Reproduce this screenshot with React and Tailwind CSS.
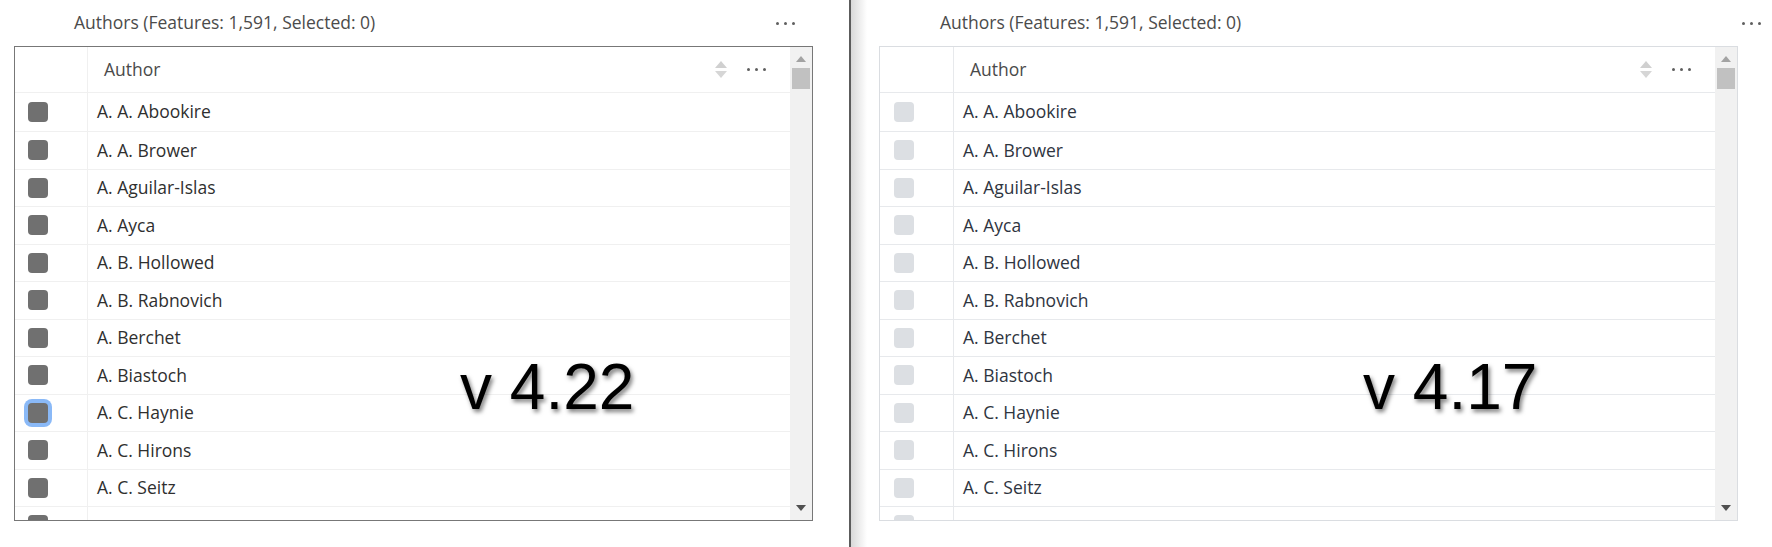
const authors = [
  'A. A. Abookire',
  'A. A. Brower',
  'A. Aguilar-Islas',
  'A. Ayca',
  'A. B. Hollowed',
  'A. B. Rabnovich',
  'A. Berchet',
  'A. Biastoch',
  'A. C. Haynie',
  'A. C. Hirons',
  'A. C. Seitz',
  '',
]

// Tiga titik menu
function Dots() {
  return (
    <div className="flex items-center gap-[5px]">
      <span className="w-[3px] h-[3px] rounded-full bg-[#5f5f5f]" />
      <span className="w-[3px] h-[3px] rounded-full bg-[#5f5f5f]" />
      <span className="w-[3px] h-[3px] rounded-full bg-[#5f5f5f]" />
    </div>
  )
}

function SortIcon() {
  return (
    <svg width="12" height="17" viewBox="0 0 12 17">
      <path d="M0 7 L6 0 L12 7 Z" fill="#d0d0d0" />
      <path d="M0 10 L12 10 L6 17 Z" fill="#d6d6d6" />
    </svg>
  )
}

function Scrollbar() {
  return (
    <div className="relative w-[22px] h-full bg-[#f1f1f1] shrink-0">
      <svg className="absolute left-[6px] top-[9px]" width="10" height="6" viewBox="0 0 10 6">
        <path d="M0 6 L5 0 L10 6 Z" fill="#a3a3a3" />
      </svg>
      <div className="absolute left-[2px] right-[2px] top-[21px] h-[21px] bg-[#c1c1c1]" />
      <svg className="absolute left-[6px] bottom-[9px]" width="10" height="6" viewBox="0 0 10 6">
        <path d="M0 0 L10 0 L5 6 Z" fill="#505050" />
      </svg>
    </div>
  )
}

function Table({ modern }) {
  const border = modern ? 'border-[#777777]' : 'border-[#dadde1]'
  const line = modern ? 'border-[#f0f0f0]' : 'border-[#e7e9ec]'
  const colW = modern ? 'w-[73px]' : 'w-[74px]'
  const boxMl = modern ? 'ml-[13px]' : 'ml-[14px]'
  const text = modern ? 'text-[#2f2f2f]' : 'text-[#2f353f]'

  return (
    <div className={`flex border ${border} ${modern ? 'w-[799px]' : 'w-[859px]'} h-[475px] bg-white`}>
      <div className="flex-1 min-w-0 overflow-hidden">
        {/* Header kolom */}
        <div className={`flex h-[46px] border-b ${line}`}>
          <div className={`${colW} shrink-0 border-r ${line}`} />
          <div className="flex-1 flex items-center pl-[16px] pr-[24px]">
            <span className="flex-1 text-[#4a4a4a]">Author</span>
            <SortIcon />
            <div className="ml-[20px]">
              <Dots />
            </div>
          </div>
        </div>

        {authors.map((name, i) => (
          <div
            key={i}
            className={`flex items-center border-b ${line} ${i === 0 ? 'h-[39px]' : 'h-[37.5px]'}`}
          >
            <div className={`${colW} shrink-0 h-full flex items-center border-r ${line}`}>
              <span
                className={`${boxMl} w-[20px] h-[20px] rounded-[4px] ${
                  modern ? 'bg-[#707070]' : 'bg-[#dcdfe3]'
                } ${modern && name === 'A. C. Haynie' ? 'ring-4 ring-[#8ab9f7]' : ''}`}
              />
            </div>
            <span className={`pl-[9px] ${text}`}>{name}</span>
          </div>
        ))}
      </div>
      <Scrollbar />
    </div>
  )
}

export default function App() {
  return (
    <div
      className="flex w-[1772px] h-[547px] bg-white overflow-hidden text-[17.5px] leading-none"
      style={{ fontFamily: '"Open Sans", "Noto Sans", sans-serif' }}
    >
      {/* Panel kiri: v 4.22 */}
      <div className="relative w-[849px] shrink-0 bg-white">
        <div className="flex items-center justify-between h-[46px] pl-[74px] pr-[54px] text-[#4b4b4b]">
          <span>Authors (Features: 1,591, Selected: 0)</span>
          <Dots />
        </div>
        <div className="pl-[14px]">
          <Table modern />
        </div>
        <span className="absolute left-[460px] top-[355px] text-[64px] leading-none text-black [text-shadow:2px_3px_4px_rgba(0,0,0,0.5)] [font-family:'Liberation_Sans',Arial,sans-serif]">
          v 4.22
        </span>
      </div>

      <div className="w-[2px] shrink-0 bg-[#5c5c5c]" />

      {/* Panel kanan: v 4.17 */}
      <div className="relative flex-1 bg-[linear-gradient(to_right,#d9d9d9,#ffffff_16px)]">
        <div className="flex items-center justify-between h-[46px] pl-[89px] pr-[11px] text-[#4b4b4b]">
          <span>Authors (Features: 1,591, Selected: 0)</span>
          <Dots />
        </div>
        <div className="pl-[28px]">
          <Table />
        </div>
        <span className="absolute left-[512px] top-[355px] text-[64px] leading-none text-black [text-shadow:2px_3px_4px_rgba(0,0,0,0.5)] [font-family:'Liberation_Sans',Arial,sans-serif]">
          v 4.17
        </span>
      </div>
    </div>
  )
}
